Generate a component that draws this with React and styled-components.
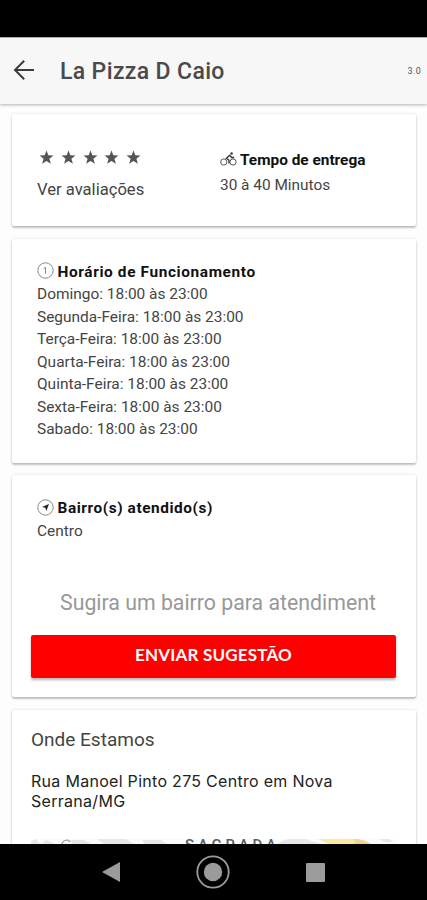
import styled, { createGlobalStyle } from 'styled-components';

const HOURS = [
  'Domingo: 18:00 às 23:00',
  'Segunda-Feira: 18:00 às 23:00',
  'Terça-Feira: 18:00 às 23:00',
  'Quarta-Feira: 18:00 às 23:00',
  'Quinta-Feira: 18:00 às 23:00',
  'Sexta-Feira: 18:00 às 23:00',
  'Sabado: 18:00 às 23:00',
];

const BackIcon = () => (
  <svg width="22" height="22" viewBox="0 0 22 22" fill="none" stroke="#3c3c3c" strokeWidth="2">
    <path d="M21 10H2.5M11.2 .8L2 10l9.2 9.2" />
  </svg>
);

const StarIcon = () => (
  <svg width="15" height="15" viewBox="0 0 14 14" fill="#555">
    <path d="M7 .4l1.7 4.5 4.8.2-3.8 3 1.4 4.8L7 10.2l-4.1 2.7 1.4-4.8-3.8-3 4.8-.2z" />
  </svg>
);

const BikeIcon = () => (
  <svg width="17" height="16" viewBox="0 0 17 16" fill="none" stroke="#555" strokeWidth="1">
    <circle cx="3.8" cy="10" r="3.1" />
    <circle cx="13" cy="10" r="3.1" />
    <path d="M9 11.6V8.2L6.4 6.2 9.8 3.2l1.8 2.3h2.6" stroke="#333" strokeWidth="1.3" />
    <circle cx="11.6" cy="1.5" r="1.2" fill="#333" stroke="none" />
  </svg>
);

const ClockIcon = () => (
  <svg width="17" height="19" viewBox="0 0 17 19" fill="none" stroke="#888" strokeWidth="1">
    <circle cx="8.5" cy="8.5" r="7.7" />
    <path d="M6.8 6.3l1.7-.8v6.2" />
  </svg>
);

const CompassIcon = () => (
  <svg width="17" height="19" viewBox="0 0 17 19" fill="none" stroke="#888" strokeWidth="1">
    <circle cx="8.5" cy="8.5" r="7.7" />
    <path d="M12 5L9.3 12 8.3 8.8 5 7.9z" fill="#222" stroke="none" />
  </svg>
);

const MapPreview = () => (
  <svg width="365" height="60" viewBox="0 0 365 60">
    <rect width="365" height="60" fill="#fbfbfb" />
    <g fill="#e6e7e8">
      <path d="M0 2l5-2 4 5H0zM11 5l4-4 9 4zM38 1h14l9 4H42zM66 0h29l8 5H73zM111 1h19l6 4h-22z" />
      <path d="M246 5q7-5 15-5h13l16 5zM317 1h10l8 5h-14zM347 0h11l4 3h-8z" />
    </g>
    <path d="M287 0h36l14 6h-37z" fill="#fae9a0" />
    <path d="M323 0q11 0 18 6h-16z" fill="#f3d191" />
    <path d="M31 5q1-4 6-4l2 2" fill="none" stroke="#999" strokeWidth="1.2" />
  </svg>
);

export default function App() {
  return (
    <>
      <GlobalStyle />
      <Screen>
        <StatusBar />
        <Header>
          <BackIcon />
          <Title>La Pizza D Caio</Title>
          <Version>3.0</Version>
        </Header>

        <Content>
          <Card $height={112}>
            <SummaryRow>
              <Rating>
                <Stars>
                  {[1, 2, 3, 4, 5].map((star) => (
                    <StarIcon key={star} />
                  ))}
                </Stars>
                <RatingLink>Ver avaliações</RatingLink>
              </Rating>
              <Delivery>
                <Heading $gap={3}>
                  <BikeIcon />
                  <HeadingText>Tempo de entrega</HeadingText>
                </Heading>
                <DeliveryTime>30 à 40 Minutos</DeliveryTime>
              </Delivery>
            </SummaryRow>
          </Card>

          <Card $height={224}>
            <Section>
              <Heading $gap={3.5}>
                <ClockIcon />
                <HeadingText $spacing={0.62}>Horário de Funcionamento</HeadingText>
              </Heading>
              {HOURS.map((line) => (
                <Line key={line}>{line}</Line>
              ))}
            </Section>
          </Card>

          <Card $height={222}>
            <Section>
              <Heading $gap={3.5}>
                <CompassIcon />
                <HeadingText $spacing={0.57}>Bairro(s) atendido(s)</HeadingText>
              </Heading>
              <Line>Centro</Line>
            </Section>
            <Suggestion>Sugira um bairro para atendiment</Suggestion>
            <SubmitButton>ENVIAR SUGESTÃO</SubmitButton>
          </Card>

          <Card $height={200}>
            <PlaceTitle>Onde Estamos</PlaceTitle>
            <Address>
              Rua Manoel Pinto 275 Centro em Nova
              <br />
              Serrana/MG
            </Address>
            <MapBox>
              <MapPreview />
              <MapLabel>SAGRADA</MapLabel>
            </MapBox>
          </Card>
        </Content>

        <NavBar>
          <svg width="18" height="20" viewBox="0 0 18 20">
            <path d="M0 10L18 0v20z" fill="#9b9b9b" />
          </svg>
          <svg width="34" height="34" viewBox="0 0 34 34">
            <circle cx="17" cy="17" r="15.7" fill="none" stroke="#9b9b9b" strokeWidth="1.8" />
            <circle cx="17" cy="17" r="9.2" fill="#9b9b9b" />
          </svg>
          <svg width="19" height="19" viewBox="0 0 19 19">
            <rect width="19" height="19" rx="1" fill="#9b9b9b" />
          </svg>
        </NavBar>
      </Screen>
    </>
  );
}

// Styles
const GlobalStyle = createGlobalStyle`
  * {
    box-sizing: border-box;
  }

  body {
    margin: 0;
    background: #fff;
    font-family: Roboto, 'Liberation Sans', sans-serif;
  }

  svg {
    display: block;
    flex-shrink: 0;
  }
`;

const Screen = styled.div`
  display: flex;
  flex-direction: column;
  width: 427px;
  height: 900px;
  overflow: hidden;
  background: #fdfdfd;
`;

const StatusBar = styled.div`
  flex: none;
  height: 37px;
  background: #000;
`;

const Header = styled.header`
  flex: none;
  display: flex;
  align-items: center;
  height: 67px;
  padding: 0 6px 0 13px;
  background: #f7f7f7;
  border-top: 1px solid #aaa;
  box-shadow: 0 1px 3px rgba(0, 0, 0, 0.3);
`;

const Title = styled.h1`
  margin: 1px 0 0 25px;
  font-size: 23px;
  font-weight: 500;
  line-height: 30px;
  letter-spacing: 0.36px;
  color: #4a4a4a;
  white-space: nowrap;
`;

const Version = styled.span`
  margin-left: auto;
  font-size: 9px;
  letter-spacing: 0.3px;
  color: #555;
`;

const Content = styled.main`
  flex: 1;
  min-height: 0;
  display: flex;
  flex-direction: column;
  gap: 12.5px;
  padding: 10px 11px 0 12px;
  overflow: hidden;
`;

const Card = styled.section`
  flex: none;
  height: ${({ $height }) => $height}px;
  background: #fff;
  border-radius: 2px;
  box-shadow: 0 2px 2px rgba(0, 0, 0, 0.22), 0 0 3px rgba(0, 0, 0, 0.12);
`;

const SummaryRow = styled.div`
  display: flex;
  padding: 35px 25px 0;
`;

const Rating = styled.div`
  width: 183px;
`;

const Stars = styled.div`
  display: flex;
  gap: 6.8px;
  padding: 1px 0 1px 2px;
`;

const RatingLink = styled.div`
  margin-top: 13px;
  font-size: 16.6px;
  line-height: 22px;
  color: #444;
`;

const Delivery = styled.div`
  flex: 1;
`;

const Heading = styled.div`
  display: flex;
  align-items: center;
  gap: ${({ $gap }) => $gap}px;
  height: 22px;
  white-space: nowrap;
`;

const HeadingText = styled.strong`
  font-size: 15.4px;
  font-weight: 700;
  letter-spacing: ${({ $spacing = 0 }) => $spacing}px;
  color: #111;
`;

const DeliveryTime = styled.div`
  margin-top: 3px;
  font-size: 15.4px;
  line-height: 22px;
  color: #444;
`;

const Section = styled.div`
  padding: 22px 25px 0;
`;

const Line = styled.div`
  position: relative;
  top: 0.5px;
  font-size: 15.45px;
  line-height: 22.5px;
  color: #444;
`;

const Suggestion = styled.div`
  width: 330px;
  margin: 46px 0 0 48px;
  font-size: 21.3px;
  line-height: 30px;
  color: #989898;
  white-space: nowrap;
`;

const SubmitButton = styled.button`
  display: block;
  width: 365px;
  height: 43px;
  margin: 17px 0 0 19px;
  padding: 0 0 3px;
  border: 0;
  border-radius: 2px;
  background: #fe0000;
  box-shadow: 0 2px 3px rgba(0, 0, 0, 0.3);
  color: #fff;
  font-family: Lato, sans-serif;
  font-size: 17px;
  font-weight: 700;
  letter-spacing: 0.18px;
`;

const PlaceTitle = styled.h2`
  margin: 0;
  padding: 17px 19px 0;
  font-size: 19px;
  font-weight: 400;
  line-height: 26px;
  color: #444;
`;

const Address = styled.p`
  margin: 18px 19px 0;
  font-family: Inter, sans-serif;
  font-size: 16px;
  line-height: 20px;
  letter-spacing: 0.29px;
  color: #222;
  white-space: nowrap;
`;

const MapBox = styled.div`
  position: relative;
  width: 365px;
  margin: 28px 0 0 19px;
`;

const MapLabel = styled.span`
  position: absolute;
  top: -3px;
  left: 154px;
  font-size: 15px;
  font-weight: 500;
  line-height: 18px;
  letter-spacing: 3.8px;
  color: #555c66;
`;

const NavBar = styled.nav`
  position: relative;
  flex: none;
  display: flex;
  align-items: center;
  gap: 76px;
  height: 56px;
  padding-left: 102px;
  background: #000;
`;
